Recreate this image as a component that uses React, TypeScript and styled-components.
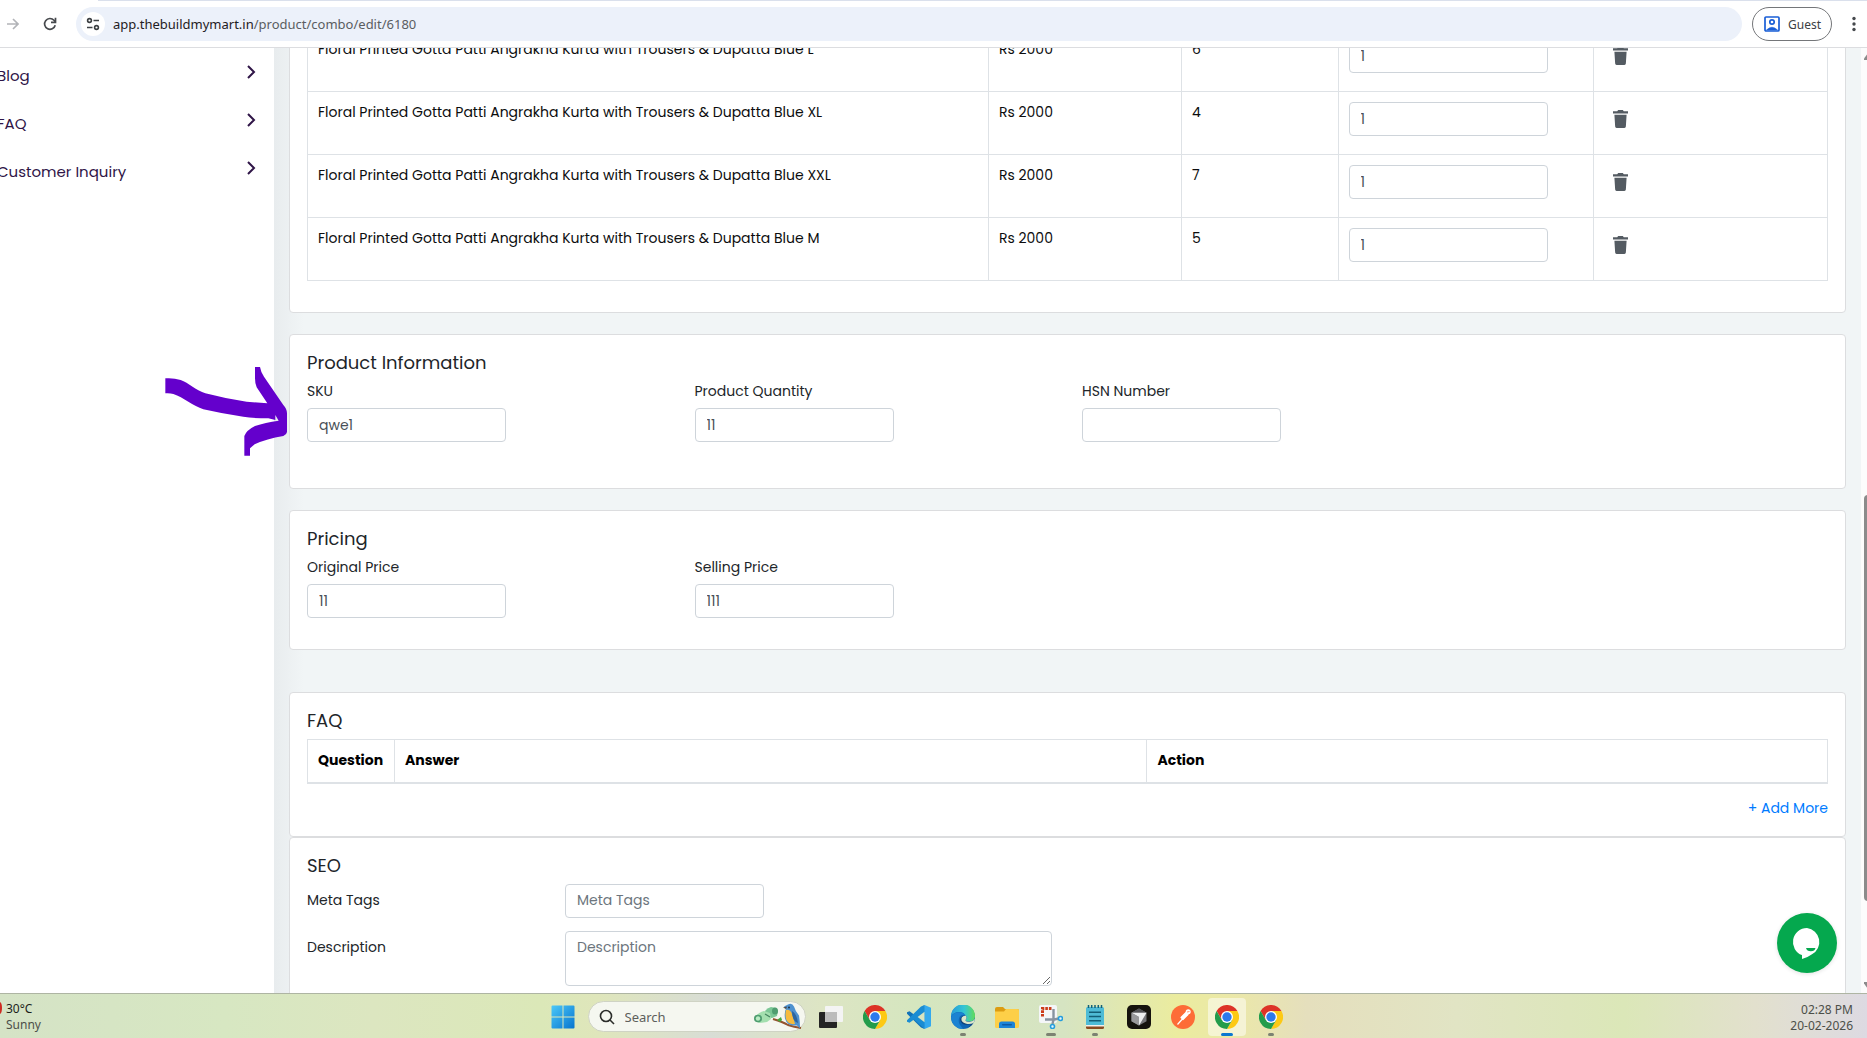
import React from "react";
import styled, { createGlobalStyle } from "styled-components";

const GlobalStyle = createGlobalStyle`
  * { box-sizing: border-box; }
  html, body { margin: 0; overflow: hidden; }
  body {
    font-family: Poppins, Inter, "Open Sans", sans-serif;
    font-size: 14px;
    line-height: 21px;
    color: #212529;
    background: #fff;
  }
  button, input, textarea {
    font: inherit;
    color: inherit;
  }
  button { padding: 0; border: 0; background: none; }
  svg { display: block; }
`;

const SYSTEM_FONT = `"Segoe UI", "Noto Sans", sans-serif`;

const Screen = styled.div`
  height: 100vh;
  display: flex;
  flex-direction: column;
  overflow: hidden;
`;

/* ---------- browser toolbar ---------- */

const BrowserBar = styled.header`
  flex: none;
  border-bottom: 1px solid #dcdde0;
  font-family: ${SYSTEM_FONT};
`;

const TabEdge = styled.div`
  height: 1px;
  margin-left: 98px;
  background: #dae0ec;
`;

const Toolbar = styled.div`
  display: flex;
  align-items: center;
  gap: 10px;
  height: 46px;
  padding: 0 1px 0 2px;
`;

const NavButtons = styled.div`
  display: flex;
  gap: 14px;
  margin-right: 4px;
`;

const ToolButton = styled.button<{ $faded?: boolean }>`
  display: grid;
  place-items: center;
  width: ${(p) => (p.$faded ? 22 : 24)}px;
  height: 24px;
  color: ${(p) => (p.$faded ? "#b2b4b8" : "#46494d")};
`;

const UrlPill = styled.div`
  flex: 1;
  display: flex;
  align-items: center;
  gap: 8px;
  height: 34px;
  padding: 0 5px;
  border-radius: 17px;
  background: #ecf1fa;
`;

const SiteButton = styled.button`
  display: grid;
  place-items: center;
  width: 24px;
  height: 24px;
  border-radius: 50%;
  background: #fff;
  color: #3c4043;
`;

const Url = styled.div`
  font-size: 13px;
  color: #5a5d61;
  b { font-weight: 400; color: #1f2023; }
`;

const GuestButton = styled.button`
  display: flex;
  align-items: center;
  gap: 8px;
  height: 34px;
  padding: 0 10px 0 11px;
  border: 1px solid #747679;
  border-radius: 17px;
  font-size: 12px;
  color: #3c4043;
`;

/* ---------- page ---------- */

const Page = styled.div`
  flex: 1;
  min-height: 0;
  display: flex;
`;

const Sidebar = styled.nav`
  flex: none;
  width: 274px;
  padding-top: 3px;
  overflow: hidden;
  background: #fff;
`;

const SideLink = styled.a`
  display: flex;
  align-items: center;
  justify-content: space-between;
  height: 48px;
  margin-left: -3px;
  padding-right: 18px;
  font-size: 15px;
  color: #2f1547;
  text-decoration: none;
  svg { margin-bottom: 7px; }
`;

const Content = styled.main`
  flex: 1;
  min-width: 0;
  padding: 0 15px;
  overflow: hidden;
  background: linear-gradient(to right, #e8ecee, #f1f5f6 30px);
`;

const Scrolled = styled.div`
  margin-top: -38px;
`;

const Card = styled.section<{ $gap?: number; $space?: number }>`
  margin-bottom: ${(p) => p.$gap ?? 0}px;
  padding: 17px 17px ${(p) => 17 + (p.$space ?? 0)}px;
  border: 1px solid #dcdddf;
  border-radius: 4px;
  background: #fff;
`;

const Title = styled.h2`
  margin: 0 0 7px;
  font-size: 18px;
  font-weight: 400;
  line-height: 22px;
`;

const Table = styled.table`
  width: 100%;
  margin-bottom: 14px;
  border-collapse: collapse;
  color: #0c0d0e;
`;

const Cell = styled.td`
  height: 63px;
  padding: 10px;
  border: 1px solid #dee2e6;
  vertical-align: top;
`;

const HeadCell = styled.th<{ $width?: string }>`
  width: ${(p) => p.$width ?? "auto"};
  height: 43px;
  padding: 10px;
  border: 1px solid #dee2e6;
  border-bottom-width: 2px;
  text-align: left;
  font-weight: 700;
  color: #000;
`;

const TextInput = styled.input`
  display: block;
  width: 199px;
  height: 34px;
  padding: 0 11px;
  border: 1px solid #ced4da;
  border-radius: 4px;
  background: #fff;
  color: #495057;
  &::placeholder { color: #6c757d; opacity: 1; }
`;

const TextBox = styled.textarea`
  display: block;
  width: 487px;
  height: 55px;
  padding: 5px 11px;
  border: 1px solid #ced4da;
  border-radius: 4px;
  resize: both;
  &::placeholder { color: #6c757d; opacity: 1; }
`;

const DeleteButton = styled.button`
  display: block;
  margin: 8px 0 0 9px;
  color: #545b62;
`;

const FieldRow = styled.div`
  display: grid;
  grid-template-columns: repeat(4, 1fr);
  margin-right: -29px;
  padding-bottom: 14px;
`;

const Field = styled.div`
  display: flex;
  flex-direction: column;
  gap: 6px;
`;

const SeoRow = styled.div`
  display: grid;
  grid-template-columns: 258px 1fr;
  margin-bottom: 13px;
  label { padding-top: 6px; }
`;

const AddLine = styled.div`
  display: flex;
  justify-content: flex-end;
`;

const AddButton = styled.button`
  color: #007bff;
`;

const ScrollTrack = styled.div`
  flex: none;
  width: 6px;
  display: flex;
  flex-direction: column;
  padding-left: 3px;
  overflow: hidden;
  background: #fcfcfc;
`;

const ScrollArrow = styled.div`
  display: flex;
  align-items: center;
  width: 10px;
  height: 16px;
`;

const ScrollSpace = styled.div<{ $grow: number }>`
  flex: ${(p) => p.$grow};
`;

const ScrollThumb = styled.div`
  flex: 406;
  width: 8px;
  border-radius: 4px;
  background: #8b8b8b;
`;

const ChatButton = styled.button`
  position: fixed;
  right: 30px;
  bottom: 65px;
  width: 60px;
  height: 60px;
  border-radius: 50%;
  background: #05a84e;
  box-shadow: 0 1px 4px rgba(0, 0, 0, 0.12);
`;

const ArrowMark = styled.svg`
  position: absolute;
  left: 165px;
  top: 366px;
`;

/* ---------- taskbar ---------- */

const Taskbar = styled.footer`
  flex: none;
  display: grid;
  grid-template-columns: 1fr auto 1fr;
  height: 45px;
  border-top: 1px solid #aeb5a3;
  background: linear-gradient(
    to right,
    #d5e3c6 0%, #d7e7c2 12%, #dce6c0 20%, #dbe8b8 29%, #dfe6bb 32%, #d8ddd5 38%,
    #dde5c4 44%, #d5e6bf 49%, #d6e4c2 57%, #ebec9f 63%, #ebe8a8 66%, #e5dfbd 70%,
    #e1e4c4 78%, #dbe7b8 87%, #e2e0cd 94%, #dddae2 100%
  );
  font-family: ${SYSTEM_FONT};
  font-size: 12px;
  line-height: 16px;
  color: #4c4f49;
`;

const Weather = styled.div`
  display: flex;
  gap: 4px;
  padding-top: 7px;
  overflow: hidden;
  svg { margin: 1px 0 0 0; }
  b { display: block; font-weight: 400; color: #1c1e1a; }
`;

const Apps = styled.div`
  display: flex;
  margin-right: 34px;
`;

const AppButton = styled.button<{ $active?: boolean; $mark?: "dot" | "bar" | "wide" }>`
  position: relative;
  display: grid;
  place-items: center;
  width: 38px;
  height: 38px;
  margin: 4px 3px 0;
  padding-bottom: 1px;
  border-radius: 4px;
  background: ${(p) => (p.$active ? "rgba(255,255,255,.5)" : "none")};
  &::after {
    content: "";
    display: ${(p) => (p.$mark ? "block" : "none")};
    position: absolute;
    bottom: 0;
    left: 50%;
    transform: translateX(-50%);
    width: ${(p) => (p.$mark === "wide" ? 12 : p.$mark === "bar" ? 10 : 6)}px;
    height: 3px;
    border-radius: 2px;
    background: ${(p) => (p.$active ? "#0b78d0" : "#7c8272")};
  }
`;

const SearchPill = styled.div`
  display: flex;
  align-items: center;
  width: 218px;
  height: 31px;
  margin: 7px 3px 0;
  padding: 0 3px 0 10px;
  border: 1px solid #cfd3c4;
  border-radius: 16px;
  background: #f5f7f0;
`;

const SearchInput = styled.input`
  flex: 1;
  min-width: 0;
  margin-left: 8px;
  border: 0;
  outline: 0;
  background: none;
  font-size: 13px;
  &::placeholder { color: #5d5f5b; opacity: 1; }
`;

const Clock = styled.div`
  padding: 8px 14px 0 0;
  text-align: right;
`;

/* ---------- icons ---------- */

const Chrome = () => (
  <svg width="24" height="24" viewBox="0 0 24 24">
    <path d="M1.6 6A12 12 0 0 1 22.4 6L12 6.4 6.8 15z" fill="#dd3327" />
    <path d="M22.4 6A12 12 0 0 1 12 24l5.2-9L12 6z" fill="#fdc914" />
    <path d="M1.6 6A12 12 0 0 0 12 24l5.2-9H6.8z" fill="#239c4b" />
    <circle cx="12" cy="12" r="6" fill="#fff" />
    <circle cx="12" cy="12" r="4.7" fill="#2c79ec" />
  </svg>
);

const WindowsLogo = () => (
  <svg width="24" height="24" viewBox="0 0 24 24">
    <defs>
      <linearGradient id="win" x1="0" y1="0" x2="1" y2="1" gradientUnits="objectBoundingBox">
        <stop offset="0" stopColor="#4bc8f8" />
        <stop offset="1" stopColor="#0674cf" />
      </linearGradient>
    </defs>
    <path d="M1.5.5h10v11h-11v-10a1 1 0 0 1 1-1zM12.500 .5h10a1 1 0 0 1 1 1v10h-11zM.5 12.500h11v11h-10a1 1 0 0 1-1-1zM12.500 12.500h11v10a1 1 0 0 1-1 1h-10z" fill="url(#win)" />
  </svg>
);

const SearchBird = () => (
  <svg width="49" height="28" viewBox="0 0 49 28">
    <path d="M12 8q2-3 6-4l5 1 2 3-1 5-5 2-6-1z" fill="#7cc796" />
    <path d="M2 14q4-5 9-6l6 2 1 6-4 3-8 1-4-2z" fill="#a3dfae" />
    <ellipse cx="5" cy="15.500" rx="4" ry="3.800" fill="#4f9d70" />
    <ellipse cx="5" cy="15.500" rx="2.200" ry="2.300" fill="#b9ecc3" />
    <ellipse cx="22" cy="8" rx="3" ry="3.600" fill="#4f9d70" />
    <path d="M12 11l5 3" stroke="#43845d" strokeWidth="1.200" />
    <path d="M20 16q10 3 15 6 6 2 13 3" fill="none" stroke="#94532e" strokeWidth="2" />
    <path d="M24 17l4-3 1 3-2 2z" fill="#44a53b" />
    <path d="M31 3.500l4-2q4-2 6 2 1 4 5 9 1 6 1 13l-3-3q-10 1-12-7-1-6 1-10z" fill="#4e91cf" />
    <path d="M33 7q4-1 6 4 2 6 3 10-7 1-9-5-1-5 0-9z" fill="#f6bb3e" />
    <path d="M39 8q5 3 6 12-6-2-6-12z" fill="#2d659f" />
    <path d="M30 4.500l4-1-1 2.500z" fill="#504a45" />
    <circle cx="36" cy="4.500" r=".9" fill="#1d2b38" />
  </svg>
);

const TaskView = () => (
  <svg width="24" height="24" viewBox="0 0 24 24">
    <rect x="0" y="7" width="18" height="16" rx="1" fill="#242424" />
    <rect x="6" y="1" width="18" height="16" rx="1" fill="#f4f4f4" />
    <path d="M6 7h12v10H7a1 1 0 0 1-1-1z" fill="#bcbcbc" />
  </svg>
);

const VsCode = () => (
  <svg width="24" height="24" viewBox="0 0 24 24">
    <path d="M17.500 0L7 9.600 2.500 6.200 0 7.300v1.500L14 22.600 17.500 24l1-5z" fill="#1273b8" />
    <path d="M17.500 24L7 14.400l-4.500 3.400L0 16.700v-1.500L14 1.400 17.500 0l1 5z" fill="#1a8cd3" />
    <path d="M17.500 0L24 2.800v18.400L17.500 24z" fill="#34a9ee" />
    <path d="M17.500 6.700v10.600L10.600 12z" fill="#d9e4bf" />
  </svg>
);

const Edge = () => (
  <svg width="24" height="24" viewBox="0 0 24 24">
    <defs>
      <linearGradient id="edgeTop" x1="0" x2="1">
        <stop offset="0" stopColor="#279bd8" />
        <stop offset=".55" stopColor="#34c5d4" />
        <stop offset="1" stopColor="#62dc58" />
      </linearGradient>
    </defs>
    <circle cx="12" cy="12" r="12" fill="#0f66b5" />
    <path d="M0 11.500A12 12 0 0 1 24 11q0 5-5.200 5.600-4 .2-4.500-1.400 2-2.200.3-4.800Q12.500 7 8 7 2.500 7 0 11.500z" fill="url(#edgeTop)" />
    <path d="M0 12Q2.500 7 8.200 7.200q4.500.3 6.100 2.900-4-1-5.800 2Q6 18 11 22.500l1 1.500A12 12 0 0 1 0 12z" fill="#1b83d2" />
    <path d="M14.700 10.400q1.800 2.600-.3 4.800.5 1.700 4.400 1.500 2.300 0 4-1.200l.7.300Q21 21 17 22.500q4-3.500 2-3.200-8 2-9.800-4.100-.6-4 5.500-4.800z" fill="#12437c" />
    <path d="M14.700 10.400q1.800 2.600-.3 4.800.5 1.700 4.400 1.500 3 0 5.200-2.700l-1.400 4q-4 1.600-8 .4-5-1.400-4-5.500 1-2.500 4.100-2.500z" fill="#dce6cb" />
  </svg>
);

const Folder = () => (
  <svg width="24" height="24" viewBox="0 0 24 24">
    <path d="M0 4a2 2 0 0 1 2-2h6l2 2h12.500A1.500 1.500 0 0 1 24 5.500V21H0z" fill="#dc9c12" />
    <path d="M0 6.500h9l2-2.500h11.500A1.500 1.500 0 0 1 24 5.500v16a1.500 1.500 0 0 1-1.500 1.500h-21A1.500 1.500 0 0 1 0 21.500z" fill="#fdcf48" />
    <path d="M4 19a2.500 2.500 0 0 1 2.500-2.500h11A2.500 2.500 0 0 1 20 19v4H4z" fill="#1b84d9" />
    <rect x="7" y="19" width="10" height="1.500" rx=".7" fill="#0c5aa5" />
  </svg>
);

const Snip = () => (
  <svg width="24" height="24" viewBox="0 0 24 24">
    <rect x="0" y="0" width="18" height="18" rx="2" fill="#f4f6f8" />
    <path d="M12.500 3.500h-9v9" fill="none" stroke="#cc3c1b" strokeWidth="3" strokeDasharray="2.600 1" />
    <path d="M14.500 4v10.500l-1 4.500M6 14.500h9.500l4-1" fill="none" stroke="#8793a0" strokeWidth="2.400" />
    <circle cx="21.500" cy="13.500" r="2" fill="#e4f5ff" stroke="#259ddd" strokeWidth="1.600" />
    <circle cx="13.500" cy="21.500" r="2" fill="#e4f5ff" stroke="#259ddd" strokeWidth="1.600" />
  </svg>
);

const Notepad = () => (
  <svg width="24" height="24" viewBox="0 0 24 24">
    <path d="M3 20h18v2.500a1.500 1.500 0 0 1-1.500 1.500h-15A1.500 1.500 0 0 1 3 22.500z" fill="#8a4a20" />
    <path d="M3 20h18v1.500H3z" fill="#f3f0ec" />
    <path d="M3 3.500A1.500 1.500 0 0 1 4.500 2h15A1.500 1.500 0 0 1 21 3.500V20H3z" fill="#4ebbd6" />
    <path d="M5.500 0v3M8.700 0v3M12 0v3M15.300 0v3M18.500 0v3" stroke="#136177" strokeWidth="1.500" />
    <path d="M6 7.200h12M6 11.500h12M6 15.700h12" stroke="#125e76" strokeWidth="1.500" />
  </svg>
);

const Cursor = () => (
  <svg width="24" height="24" viewBox="0 0 24 24">
    <rect width="24" height="24" rx="5" fill="#15120d" />
    <path d="M12 3.500l7.500 4.300v8.500L12 20.500l-7.500-4.200V7.800z" fill="#77767a" />
    <path d="M12 3.500l7.500 4.300H4.500z" fill="#525154" />
    <path d="M4.500 7.800h15L12 20.500V12z" fill="#eeeeef" />
    <path d="M4.500 7.800L12 12v8.500l-7.500-4.200z" fill="#99989b" />
  </svg>
);

const Postman = () => (
  <svg width="24" height="24" viewBox="0 0 24 24">
    <circle cx="12" cy="12" r="12" fill="#fd6c37" />
    <path d="M16 8.500l-5.500 6.500-4 4.500M10 12.500l5-5 2 2-5 5z" fill="#fff" stroke="#fff" strokeWidth="1.200" strokeLinejoin="round" />
    <circle cx="17.200" cy="6.800" r="2.500" fill="#fff" />
    <path d="M16 7l2.500-.5" stroke="#fd6c37" strokeWidth=".7" />
  </svg>
);

const Trash = () => (
  <svg width="15" height="18" viewBox="0 0 16 18" preserveAspectRatio="none">
    <path d="M5.500 0h5l1 1.300H16v2.200H0V1.300h4.500zM1.500 4.800h13L13.700 16.600A1.500 1.500 0 0 1 12.200 18H3.800a1.500 1.500 0 0 1-1.500-1.400z" fill="currentColor" />
  </svg>
);

/* ---------- data ---------- */

const sideItems = ["Blog", "FAQ", "Customer Inquiry"];

const variants = [
  { size: "L", stock: 6 },
  { size: "XL", stock: 4 },
  { size: "XXL", stock: 7 },
  { size: "M", stock: 5 },
];

const apps: { name: string; icon: React.ReactNode; mark?: "dot" | "bar" | "wide"; active?: boolean }[] = [
  { name: "Task view", icon: <TaskView /> },
  { name: "Chrome", icon: <Chrome /> },
  { name: "Visual Studio Code", icon: <VsCode /> },
  { name: "Edge", icon: <Edge />, mark: "dot" },
  { name: "File Explorer", icon: <Folder /> },
  { name: "Snipping Tool", icon: <Snip />, mark: "bar" },
  { name: "Notepad", icon: <Notepad />, mark: "dot" },
  { name: "Cursor", icon: <Cursor /> },
  { name: "Postman", icon: <Postman /> },
  { name: "Chrome window", icon: <Chrome />, mark: "wide", active: true },
  { name: "Chrome profile", icon: <Chrome />, mark: "dot" },
];

const LabelledInput = ({ id, label, value }: { id: string; label: string; value: string }) => (
  <Field>
    <label htmlFor={id}>{label}</label>
    <TextInput id={id} defaultValue={value} />
  </Field>
);

export default function App() {
  return (
    <Screen>
      <GlobalStyle />
      <BrowserBar>
        <TabEdge />
        <Toolbar>
          <NavButtons>
            <ToolButton $faded aria-label="Forward">
              <svg width="12" height="12" viewBox="0 0 12 12" fill="none" stroke="currentColor" strokeWidth="1.600">
                <path d="M0 6h11M6 1l5 5-5 5" />
              </svg>
            </ToolButton>
            <ToolButton aria-label="Reload">
              <svg width="14" height="14" viewBox="0 0 14 14" fill="none" stroke="currentColor" strokeWidth="1.700">
                <path d="M12.200 8.200A5.400 5.400 0 1 1 11 3.300L12.300 4.800" />
                <path d="M12.500.8v4.500H8" />
              </svg>
            </ToolButton>
          </NavButtons>
          <UrlPill>
            <SiteButton aria-label="View site information">
              <svg width="14" height="14" viewBox="0 0 14 14" fill="none" stroke="currentColor" strokeWidth="1.600">
                <circle cx="3.500" cy="3.500" r="1.900" />
                <circle cx="10.500" cy="10.500" r="1.900" />
                <path d="M7.500 3.500H13M1 10.500h5.500" />
              </svg>
            </SiteButton>
            <Url>
              <b>app.thebuildmymart.in</b>/product/combo/edit/6180
            </Url>
          </UrlPill>
          <GuestButton>
            <svg width="16" height="16" viewBox="0 0 16 16" fill="none" stroke="#1a5fd6" strokeWidth="1.700">
              <rect x="1" y="1" width="14" height="14" rx="1" />
              <circle cx="8" cy="6" r="2.200" />
              <path d="M2.500 14q5.500-5.500 11 0z" fill="#1a5fd6" strokeWidth="0.600" />
            </svg>
            Guest
          </GuestButton>
          <ToolButton aria-label="Menu">
            <svg width="4" height="16" viewBox="0 0 4 16" fill="currentColor">
              <circle cx="2" cy="2.500" r="1.700" />
              <circle cx="2" cy="8" r="1.700" />
              <circle cx="2" cy="13.500" r="1.700" />
            </svg>
          </ToolButton>
        </Toolbar>
      </BrowserBar>

      <Page>
        <Sidebar>
          {sideItems.map((item) => (
            <SideLink href="#" key={item}>
              {item}
              <svg width="10" height="14" viewBox="0 0 10 14" fill="none" stroke="currentColor" strokeWidth="2">
                <path d="M2 1l6 6-6 6" />
              </svg>
            </SideLink>
          ))}
        </Sidebar>

        <Content>
          <Scrolled>
            <Card $gap={21}>
              <Table>
                <colgroup>
                  <col width="44.8%" />
                  <col width="12.7%" />
                  <col width="10.3%" />
                  <col width="16.8%" />
                  <col />
                </colgroup>
                <tbody>
                  {variants.map(({ size, stock }) => (
                    <tr key={size}>
                      <Cell>Floral Printed Gotta Patti Angrakha Kurta with Trousers &amp; Dupatta Blue {size}</Cell>
                      <Cell>Rs 2000</Cell>
                      <Cell>{stock}</Cell>
                      <Cell>
                        <TextInput aria-label={`Quantity for size ${size}`} defaultValue="1" />
                      </Cell>
                      <Cell>
                        <DeleteButton aria-label={`Remove size ${size}`}>
                          <Trash />
                        </DeleteButton>
                      </Cell>
                    </tr>
                  ))}
                </tbody>
              </Table>
            </Card>

            <Card $gap={21} $space={15}>
              <Title>Product Information</Title>
              <FieldRow>
                <LabelledInput id="sku" label="SKU" value="qwe1" />
                <LabelledInput id="quantity" label="Product Quantity" value="11" />
                <LabelledInput id="hsn" label="HSN Number" value="" />
              </FieldRow>
            </Card>

            <Card $gap={42}>
              <Title>Pricing</Title>
              <FieldRow>
                <LabelledInput id="original" label="Original Price" value="11" />
                <LabelledInput id="selling" label="Selling Price" value="111" />
              </FieldRow>
            </Card>

            <Card>
              <Title>FAQ</Title>
              <Table>
                <thead>
                  <tr>
                    <HeadCell $width="87px">Question</HeadCell>
                    <HeadCell $width="49.5%">Answer</HeadCell>
                    <HeadCell>Action</HeadCell>
                  </tr>
                </thead>
              </Table>
              <AddLine>
                <AddButton>+ Add More</AddButton>
              </AddLine>
            </Card>

            <Card>
              <Title>SEO</Title>
              <SeoRow>
                <label htmlFor="meta">Meta Tags</label>
                <TextInput id="meta" placeholder="Meta Tags" />
              </SeoRow>
              <SeoRow>
                <label htmlFor="description">Description</label>
                <TextBox id="description" placeholder="Description" />
              </SeoRow>
            </Card>
          </Scrolled>
        </Content>

        <ScrollTrack>
          <ScrollArrow>
            <svg width="10" height="7" viewBox="0 0 10 7"><path d="M0 7V5.500L4 0h2l4 5.500V7z" fill="#8b8b8b" /></svg>
          </ScrollArrow>
          <ScrollSpace $grow={431} />
          <ScrollThumb />
          <ScrollSpace $grow={76} />
          <ScrollArrow>
            <svg width="10" height="7" viewBox="0 0 10 7"><path d="M0 0v1.500L4 7h2l4-5.500V0z" fill="#8b8b8b" /></svg>
          </ScrollArrow>
        </ScrollTrack>
      </Page>

      <Taskbar>
        <Weather>
          <svg width="2" height="12" viewBox="0 0 2 12"><path d="M0 0q2 1 2 6T0 12z" fill="#cf2b22" /></svg>
          <div>
            <b>30°C</b>
            Sunny
          </div>
        </Weather>
        <Apps>
          <AppButton aria-label="Start"><WindowsLogo /></AppButton>
          <SearchPill>
            <svg width="16" height="16" viewBox="0 0 16 16" fill="none" stroke="#2b2d2a" strokeWidth="1.600">
              <circle cx="7" cy="7" r="5.500" />
              <path d="M11 11l4 4" />
            </svg>
            <SearchInput aria-label="Search" placeholder="Search" />
            <SearchBird />
          </SearchPill>
          {apps.map(({ name, icon, mark, active }) => (
            <AppButton key={name} aria-label={name} $mark={mark} $active={active}>
              {icon}
            </AppButton>
          ))}
        </Apps>
        <Clock>
          02:28 PM
          <br />
          20-02-2026
        </Clock>
      </Taskbar>

      <ChatButton aria-label="Open chat">
        <svg width="60" height="60" viewBox="0 0 60 60">
          <path d="M30 15a14 14 0 0 0-5 27.100V46q5.500-1.500 10-4.800A14 14 0 0 0 30 15z" fill="#fff" />
          <path d="M29 35h9.500q-.8 3.200-4.700 3.200T29 35z" fill="#05a84e" />
        </svg>
      </ChatButton>

      <ArrowMark width="123" height="91" viewBox="45 168 369 273" fill="#6400cc">
        <path d="M46 205Q70 203 92 210C115 218 140 242 166 250Q230 267 290 275L352 280 320 232Q315 222 315 205V171H330Q332 185 342 200L400 285Q411 297 411 310V366Q410 374 400 378 350 386 314 403L300 415V437H283V378Q290 360 315 348 345 337 386 332L376 315V330L355 325Q310 325 280 320 220 312 160 298C130 288 100 262 70 252Q60 249 46 250z" />
      </ArrowMark>
    </Screen>
  );
}
